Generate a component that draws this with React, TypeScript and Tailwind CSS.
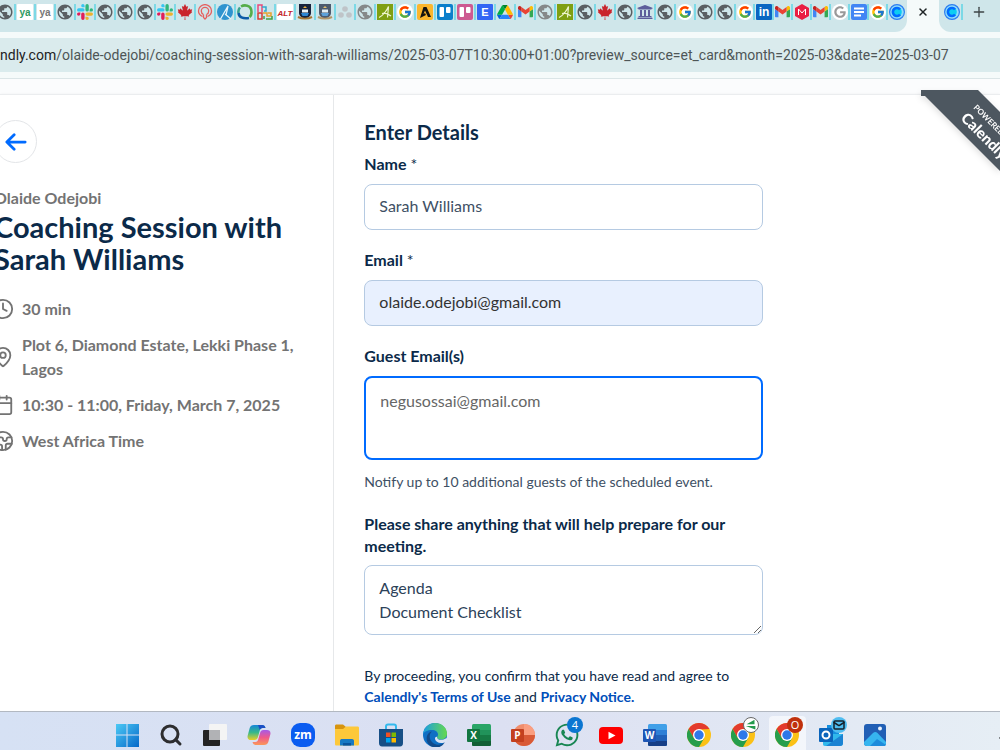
import React from "react";
import { FcGoogle } from "react-icons/fc";
import { MdPublic } from "react-icons/md";
import { FaCanadianMapleLeaf, FaGoogle, FaUniversity, FaWhatsapp } from "react-icons/fa";
import { Calendar, ChevronUp, Clock, Earth, Mail, MapPin, Plus, Search, X } from "lucide-react";

type TileProps = { fill: string; color?: string; text: string; size?: number; italic?: boolean };

const Tile: React.FC<TileProps> = ({ fill, color = "#fff", text, size = 11, italic }) => (
  <svg viewBox="0 0 16 16" className="size-4">
    <rect width="16" height="16" rx="1" fill={fill} />
    <text
      x="8"
      y="12"
      textAnchor="middle"
      fontSize={size}
      fontWeight="700"
      fontStyle={italic ? "italic" : "normal"}
      fontFamily="Liberation Sans, sans-serif"
      fill={color}
    >
      {text}
    </text>
  </svg>
);

const Globe = () => <MdPublic className="size-[18px] shrink-0 text-[#5a5f63]" />;
const PaleGlobe = () => <MdPublic className="size-[18px] shrink-0 text-[#858889]" />;
const Maple = () => <FaCanadianMapleLeaf className="size-4 text-[#c9252d]" />;
const University = () => <FaUniversity className="size-4 text-[#5d5e9b]" />;

const Google = () => (
  <span className="flex size-4 items-center justify-center rounded-full bg-white">
    <FcGoogle className="size-3.5" />
  </span>
);

const GreyGoogle = () => (
  <span className="flex size-4 items-center justify-center rounded-full bg-white">
    <FaGoogle className="size-3 text-[#999]" />
  </span>
);

const Slack = () => (
  <svg viewBox="0 0 24 24" className="size-4">
    <path fill="#E01E5A" d="M5.042 15.165a2.528 2.528 0 0 1-2.52 2.523A2.528 2.528 0 0 1 0 15.165a2.527 2.527 0 0 1 2.522-2.52h2.52v2.52zM6.313 15.165a2.527 2.527 0 0 1 2.521-2.52 2.527 2.527 0 0 1 2.521 2.52v6.313A2.528 2.528 0 0 1 8.834 24a2.528 2.528 0 0 1-2.521-2.522v-6.313z" />
    <path fill="#36C5F0" d="M8.834 5.042a2.528 2.528 0 0 1-2.521-2.52A2.528 2.528 0 0 1 8.834 0a2.528 2.528 0 0 1 2.521 2.522v2.52H8.834zM8.834 6.313a2.528 2.528 0 0 1 2.521 2.521 2.528 2.528 0 0 1-2.521 2.521H2.522A2.528 2.528 0 0 1 0 8.834a2.528 2.528 0 0 1 2.522-2.521h6.312z" />
    <path fill="#2EB67D" d="M18.956 8.834a2.528 2.528 0 0 1 2.522-2.521A2.528 2.528 0 0 1 24 8.834a2.528 2.528 0 0 1-2.522 2.521h-2.522V8.834zM17.688 8.834a2.528 2.528 0 0 1-2.523 2.521 2.527 2.527 0 0 1-2.52-2.521V2.522A2.527 2.527 0 0 1 15.165 0a2.528 2.528 0 0 1 2.523 2.522v6.312z" />
    <path fill="#ECB22E" d="M15.165 18.956a2.528 2.528 0 0 1 2.523 2.522A2.528 2.528 0 0 1 15.165 24a2.527 2.527 0 0 1-2.52-2.522v-2.522h2.52zM15.165 17.688a2.527 2.527 0 0 1-2.52-2.523 2.526 2.526 0 0 1 2.52-2.52h6.313A2.527 2.527 0 0 1 24 15.165a2.528 2.528 0 0 1-2.522 2.523h-6.313z" />
  </svg>
);

const Gmail = () => (
  <svg viewBox="52 42 88 66" className="w-[15px]">
    <path fill="#4285f4" d="M58 108h14V74L52 59v43c0 3.32 2.69 6 6 6" />
    <path fill="#34a853" d="M120 108h14c3.32 0 6-2.69 6-6V59l-20 15" />
    <path fill="#fbbc04" d="M120 48v26l20-15v-8c0-7.42-8.47-11.65-14.4-7.2" />
    <path fill="#ea4335" d="M72 74V48l24 18 24-18v26L96 92" />
    <path fill="#c5221f" d="M52 51v8l20 15V48l-5.6-4.2c-5.94-4.45-14.4-.22-14.4 7.2" />
  </svg>
);

const Drive = () => (
  <svg viewBox="0 0 87.3 78" className="w-4">
    <path fill="#0066da" d="m6.6 66.85 3.85 6.65c.8 1.4 1.95 2.5 3.3 3.3l13.75-23.8h-27.5c0 1.55.4 3.1 1.2 4.5z" />
    <path fill="#00ac47" d="m43.65 25-13.75-23.8c-1.35.8-2.5 1.9-3.3 3.3l-25.4 44a9.06 9.06 0 0 0 -1.2 4.5h27.5z" />
    <path fill="#ea4335" d="m73.55 76.8c1.35-.8 2.5-1.9 3.3-3.3l1.6-2.75 7.65-13.25c.8-1.4 1.2-2.95 1.2-4.5h-27.502l5.852 11.5z" />
    <path fill="#00832d" d="m43.65 25 13.75-23.8c-1.35-.8-2.9-1.2-4.5-1.2h-18.5c-1.6 0-3.15.45-4.5 1.2z" />
    <path fill="#2684fc" d="m59.8 53h-32.3l-13.75 23.8c1.35.8 2.9 1.2 4.5 1.2h50.8c1.6 0 3.15-.45 4.5-1.2z" />
    <path fill="#ffba00" d="m73.4 26.5-12.7-22c-.8-1.4-1.95-2.5-3.3-3.3l-13.75 23.8 16.15 28h27.45c0-1.55-.4-3.1-1.2-4.5z" />
  </svg>
);

const Pin = () => (
  <svg viewBox="0 0 16 16" className="size-4" fill="none" stroke="#e5605f" strokeWidth="1.300">
    <path d="M5.500 12.500C3 11.300 1.500 9.300 1.500 6.900a6.500 6.300 0 0 1 13 0c0 2.400-1.500 4.400-4 5.600" />
    <path d="M6.500 10.500C4.900 9.800 4.300 8.500 4.300 7a3.700 3.700 0 0 1 7.400 0c0 1.500-.6 2.800-2.200 3.500" />
    <path d="M6.500 10.500v3L8 15l1.500-1.500v-3" />
  </svg>
);

const Compass = () => (
  <svg viewBox="0 0 16 16" className="size-4">
    <circle cx="8" cy="8" r="8" fill="#2f94cf" />
    <path d="M3.500 15 11 2l-2 9M8 10l6 5" stroke="#e6f5fb" strokeWidth="1.300" fill="none" />
  </svg>
);

const Ring = () => (
  <svg viewBox="0 0 16 16" className="size-4" fill="none" strokeWidth="2.600">
    <path d="M4 2.500C6.500 1 14.500 0 14.500 8c0 3-.5 4-2 5" stroke="#55ad4a" />
    <path d="M3 3.500C1.300 5.500 1.300 8 1.500 9" stroke="#3aa38f" />
    <path d="M1.500 9c.5 4 4 6 10.500 5" stroke="#0d5ba8" />
  </svg>
);

const Maze = () => (
  <svg viewBox="0 0 16 16" className="size-4" fill="none" strokeWidth="1.500">
    <path d="M1 8V1h4v7" stroke="#e9487c" />
    <path d="M5 3h4v4H7" stroke="#33a9cf" />
    <path d="M1 9h4v6H1z" stroke="#d83a35" />
    <path d="M6 9h4v3h4V9h-3" stroke="#e7a22e" />
    <path d="M7 15v-3M9 15h6v-3" stroke="#459f45" />
  </svg>
);

const Crest = () => (
  <svg viewBox="0 0 16 16" className="size-4">
    <path d="M2 0h12v9c0 3-3 5-6 6-3-1-6-3-6-6z" fill="#17233c" />
    <path d="M5 5.500h6v3H5z" fill="#e9f2f7" />
    <path d="M4 9h8l-1.500 3h-5z" fill="#2c86d4" />
    <path d="m8 2 2 2H6z" fill="#f2b33c" />
    <path d="M1 13c4 2 10 2 14 0" stroke="#a57735" strokeWidth="2" fill="none" />
  </svg>
);

const GreyCrest = () => (
  <span className="opacity-70">
    <Crest />
  </span>
);

const Asana = () => (
  <svg viewBox="0 0 16 16" className="size-4" fill="#bfc4c8">
    <circle cx="8" cy="5" r="2.800" />
    <circle cx="4" cy="11" r="2.800" />
    <circle cx="12" cy="11" r="2.800" />
  </svg>
);

const Leaf = () => (
  <svg viewBox="0 0 16 16" className="size-4">
    <rect width="16" height="16" fill="#7f9f12" />
    <path d="M2 13.500C6 12 10 6 11.500 2.500L10.500 13.500M5 9.500c3-1 5-.5 9 2.500" stroke="#eef5cf" strokeWidth="1.200" fill="none" />
  </svg>
);

const Arrowhead = () => (
  <svg viewBox="0 0 16 16" className="size-4">
    <rect width="16" height="16" rx="2" fill="#fbb62c" />
    <path d="M6.500 3h3L14 13h-3L8 6.500 6.500 10 8 9l1 2-6 3z" fill="#15130f" />
  </svg>
);

const Trello: React.FC<{ fill: string }> = ({ fill }) => (
  <svg viewBox="0 0 16 16" className="size-4">
    <rect width="16" height="16" rx="2" fill={fill} />
    <rect x="2.500" y="3" width="4.500" height="10" rx="1" fill="#fff" />
    <rect x="9" y="3" width="4.500" height="6" rx="1" fill="#fff" />
  </svg>
);

const Hexagon = () => (
  <svg viewBox="0 0 16 16" className="size-4">
    <path d="m8 0 7 4v8l-7 4-7-4V4z" fill="#ea1f43" />
    <path d="M4.500 11V5L8 9l3.500-4v6" stroke="#fff" strokeWidth="1" fill="none" />
  </svg>
);

const Docs = () => (
  <svg viewBox="0 0 16 16" className="size-4">
    <rect width="16" height="16" rx="2" fill="#4285f4" />
    <path d="M3 4.500h10M3 8h10M3 11.500h7" stroke="#fff" strokeWidth="1.800" />
  </svg>
);

const CalendlyMark = () => (
  <svg viewBox="0 0 16 16" className="size-4">
    <circle cx="8" cy="8" r="7.400" fill="#8fdcfb" stroke="#2c7df0" strokeWidth="1.200" />
    <circle cx="8" cy="8" r="4.800" fill="#0ccdf2" />
    <path d="M11 10.500A4 4 0 1 1 11 5.500" stroke="#006bff" strokeWidth="2.600" fill="none" />
  </svg>
);

const wideTabs: React.ReactNode[] = [
  <Globe />, <Tile fill="#fff" color="#2f9a62" text="ya" size={10} />, <Tile fill="#fff" color="#777" text="ya" size={10} />,
  <Globe />, <Slack />, <Globe />, <Globe />, <Globe />, <Slack />, <Maple />, <Pin />, <Compass />, <Ring />, <Maze />,
  <Tile fill="#fff" color="#c32429" text="ALT" size={8} italic />, <Crest />, <GreyCrest />, <Asana />, <PaleGlobe />, <Leaf />,
  <Google />, <Arrowhead />, <Trello fill="#0b7fcb" />, <Trello fill="#cd5a91" />, <Tile fill="#3366f4" text="E" />, <Drive />,
  <Gmail />, <PaleGlobe />, <Leaf />, <Globe />, <Maple />, <Globe />, <University />, <Globe />, <Google />, <Globe />, <Globe />,
];

const narrowTabs: React.ReactNode[] = [
  <Google />, <Tile fill="#0a66c2" text="in" size={12} />, <Gmail />, <Hexagon />, <Gmail />, <GreyGoogle />, <Docs />, <Google />,
  <CalendlyMark />,
];

const BrowserChrome = () => (
  <header className="shrink-0 border-b border-[#dbe5e7] bg-[#f5fafa]">
    <div className="flex h-8 overflow-hidden">
      <div className="flex shrink-0 rounded-br-xl bg-[#cfe6ea] pt-1">
        <div className="-ml-1 flex h-4">
          {wideTabs.map((icon, i) => (
            <span key={i} className="flex w-5 items-center justify-center border-r-2 border-[#7cd9e6]">
              {icon}
            </span>
          ))}
          {narrowTabs.map((icon, i) => (
            <span key={i} className="flex w-[19px] items-center justify-center border-r-2 border-[#7cd9e6] last:border-transparent">
              {icon}
            </span>
          ))}
        </div>
      </div>
      <button aria-label="Close tab" className="flex h-6 w-8 shrink-0 items-center justify-center">
        <X className="size-3 text-[#1f2426]" strokeWidth={3} />
      </button>
      <div className="flex flex-1 items-start gap-2 rounded-bl-xl bg-[#cfe6ea] pt-1 pl-1">
        <span className="flex h-4 w-5 items-center justify-center border-r-2 border-[#7cd9e6]">
          <CalendlyMark />
        </span>
        <button aria-label="New tab">
          <Plus className="size-4 text-[#3e4547]" strokeWidth={2} />
        </button>
      </div>
    </div>
    <div className="my-1.5 flex h-[34px] items-center overflow-hidden bg-[#daebed] font-['Roboto','Noto_Sans',sans-serif] text-sm whitespace-nowrap text-[#4e5657]">
      <span className="text-[#1d2223]">ndly.com</span>
      <span>/olaide-odejobi/coaching-session-with-sarah-williams/2025-03-07T10:30:00+01:00?preview_source=et_card&month=2025-03&date=2025-03-07</span>
    </div>
  </header>
);

const details = [
  { Icon: Clock, text: "30 min" },
  { Icon: MapPin, text: "Plot 6, Diamond Estate, Lekki Phase 1, Lagos" },
  { Icon: Calendar, text: "10:30 - 11:00, Friday, March 7, 2025" },
  { Icon: Earth, text: "West Africa Time" },
];

const EventSummary = () => (
  <aside className="box-content w-1/3 shrink-0 border-r border-[#e6e8ea]">
    <div className="-ml-1.5 pt-[25px] pr-6">
      <button
        aria-label="Back"
        className="flex size-[43px] items-center justify-center rounded-full border border-[#e3e5e8] text-[#006bff]"
      >
        <svg viewBox="0 0 24 24" className="size-[22px]" fill="none" stroke="currentColor" strokeWidth="3" strokeLinecap="round" strokeLinejoin="round">
          <path d="M22 12H3M10 4l-8 8 8 8" />
        </svg>
      </button>
      <p className="mt-[23px] font-bold text-[#737373]">Olaide Odejobi</p>
      <h1 className="mt-px text-[29px] leading-8 font-bold text-[#0b2a49]">Coaching Session with Sarah Williams</h1>
      <ul className="mt-[22px] space-y-3 font-bold text-[#737373]">
        {details.map(({ Icon, text }) => (
          <li key={text} className="flex items-center gap-2">
            <Icon className="-ml-0.5 size-[22px] shrink-0" strokeWidth={2} />
            <span>{text}</span>
          </li>
        ))}
      </ul>
    </div>
  </aside>
);

const input = "mt-[9px] block h-[46px] w-full rounded-lg border border-[#b5cae2] px-3.5 pb-1";
const label = "block font-bold leading-[22px]";

const DetailsForm = () => (
  <form className="w-[399px] max-w-full text-[#0b2a49]">
    <h2 className="text-xl leading-6 font-bold">Enter Details</h2>
    <label htmlFor="name" className={`${label} mt-[9px]`}>
      Name <span className="font-normal">*</span>
    </label>
    <input id="name" defaultValue="Sarah Williams" className={`${input} text-[#3e5064]`} />
    <label htmlFor="email" className={`${label} mt-[19px]`}>
      Email <span className="font-normal">*</span>
    </label>
    <input id="email" defaultValue="olaide.odejobi@gmail.com" className={`${input} bg-[#e8f0fe] text-[#333]`} />
    <label htmlFor="guests" className={`${label} mt-[19px]`}>
      Guest Email(s)
    </label>
    <textarea
      id="guests"
      defaultValue="negusossai@gmail.com"
      className="mt-[9px] block h-[84px] w-full resize-none rounded-lg border-2 border-[#006bff] px-3.5 py-[11px] text-[#666] outline-none"
    />
    <p className="mt-[11px] text-sm leading-[21px] text-[#3e5064]">Notify up to 10 additional guests of the scheduled event.</p>
    <label htmlFor="notes" className={`${label} mt-[21px]`}>
      Please share anything that will help prepare for our meeting.
    </label>
    <textarea
      id="notes"
      defaultValue={"Agenda\nDocument Checklist"}
      className="mt-2 block h-[70px] w-full resize-y rounded-lg border border-[#b5cae2] px-3.5 py-2.5 text-[#2c4259]"
    />
    <p className="mt-[30px] text-sm leading-[21px]">
      By proceeding, you confirm that you have read and agree to{" "}
      <a href="#terms" className="font-bold text-[#004eba]">Calendly's Terms of Use</a> and{" "}
      <a href="#privacy" className="font-bold text-[#004eba]">Privacy Notice.</a>
    </p>
  </form>
);

const Ribbon = () => (
  <a href="#calendly" aria-label="Powered by Calendly" className="absolute top-[11px] right-0">
    <svg viewBox="0 0 79 84" className="h-[84px] w-[79px] drop-shadow-md">
      <path d="M0 0h57l22 22v59L4 6H0z" fill="#4d5760" />
      <g fill="#fff" fontFamily="Lato, sans-serif">
        <text transform="translate(52 18) rotate(45)" fontSize="8" fontWeight="700">POWERED BY</text>
        <text transform="translate(39 29) rotate(45)" fontSize="15" fontWeight="900">Calendly</text>
      </g>
    </svg>
  </a>
);

const OfficeIcon: React.FC<{ letter: string; shades: string[]; round?: boolean }> = ({ letter, shades, round }) => (
  <svg viewBox="0 0 24 24" className="size-6">
    {round ? (
      <>
        <circle cx="13" cy="12" r="11" fill={shades[0]} />
        <path d="M13 1a11 11 0 0 1 11 11H13z" fill={shades[1]} />
        <path d="M24 12a11 11 0 0 1-22 0z" fill={shades[2]} />
      </>
    ) : (
      <>
        <rect x="5" y="1" width="19" height="22" rx="1.500" fill={shades[0]} />
        <path d="M5 7h19v5H5z" fill={shades[1]} />
        <path d="M5 12h19v6H5z" fill={shades[2]} />
        <path d="M5 18h19v3.500a1.500 1.500 0 0 1-1.500 1.500h-16A1.500 1.500 0 0 1 5 21.500z" fill={shades[3]} />
      </>
    )}
    <rect y="6" width="13" height="13" rx="1" fill={shades[4]} />
    <text x="6.500" y="16" fontSize="10" fontWeight="700" textAnchor="middle" fill="#fff" fontFamily="Open Sans, sans-serif">
      {letter}
    </text>
  </svg>
);

const Windows = () => (
  <svg viewBox="0 0 24 24" className="size-6">
    <defs>
      <linearGradient id="win" x2="1" y2="1">
        <stop stopColor="#4cc9f5" />
        <stop offset="1" stopColor="#0669c9" />
      </linearGradient>
    </defs>
    <path d="M1 1h10.500v10.500H1zM12.500 1H24v10.500H12.500zM1 12.500h10.500V24H1zM12.500 12.500H24V24H12.500z" fill="url(#win)" />
  </svg>
);

const TaskView = () => (
  <svg viewBox="0 0 24 24" className="size-6">
    <rect y="7" width="17" height="16" rx="1" fill="#242424" />
    <rect x="6" y="1" width="18" height="16" rx="1" fill="#f4f4f4" />
    <path d="M6 7h11v10H6z" fill="#b1b2b5" />
  </svg>
);

const Copilot = () => (
  <svg viewBox="0 0 24 24" className="size-6">
    <defs>
      <linearGradient id="copA" x2="0" y2="1">
        <stop stopColor="#1687d9" />
        <stop offset=".5" stopColor="#38b88a" />
        <stop offset="1" stopColor="#e9cf26" />
      </linearGradient>
      <linearGradient id="copB" x2="0" y2="1">
        <stop stopColor="#a55ae8" />
        <stop offset=".5" stopColor="#ef5a8b" />
        <stop offset="1" stopColor="#fb9858" />
      </linearGradient>
    </defs>
    <path d="M7 2h8c2 0 3 1 3.500 3h-3c-1.500 0-2.300 1-2.700 2.500L11 14c-.6 2-1.500 3-3.500 3H4c-2.500 0-4-1.500-3.300-4.500l2-7.500C3.300 3 4.700 2 7 2z" fill="url(#copA)" />
    <path d="M17 22H9c-2 0-3-1-3.500-3h3c1.500 0 2.300-1 2.700-2.500L13 10c.6-2 1.500-3 3.500-3H20c2.500 0 4 1.500 3.300 4.500l-2 7.500c-.6 2-2 3-4.300 3z" fill="url(#copB)" />
    <path d="M11 2h4c2 0 3 1 3.500 3h-3c-1.500 0-2.300 1-2.700 2z" fill="#1b4fc4" />
  </svg>
);

const Zoom = () => (
  <svg viewBox="0 0 24 24" className="size-6">
    <rect width="24" height="24" rx="9" fill="#0b5cf0" />
    <text x="12" y="15.500" fontSize="12" fontWeight="700" textAnchor="middle" fill="#fff" fontFamily="Open Sans, sans-serif">zm</text>
  </svg>
);

const Folder = () => (
  <svg viewBox="0 0 24 24" className="size-6">
    <path d="M0 3c0-1 .5-1.500 1.500-1.500H8L11 4v3H0z" fill="#d7940f" />
    <path d="M0 6h8l3-2.500h11.500c1 0 1.500.5 1.500 1.500v16c0 1-.5 1.500-1.500 1.500h-21C.5 22.500 0 22 0 21z" fill="#fdc83a" />
    <path d="M5 22.500V18c0-1.500 1-2 2-2h10c1.500 0 2 1 2 2v4.500z" fill="#1779c4" />
    <path d="M8 22.500V20h8v2.500z" fill="#0a559e" />
  </svg>
);

const Store = () => (
  <svg viewBox="0 0 24 24" className="size-6">
    <path d="M7 7V3.500C7 2 8 1.500 9 1.500h6c1.500 0 2 .5 2 2V7" fill="none" stroke="#35b9ed" strokeWidth="2" />
    <path d="M0 6h24v14c0 2-1 3.500-3 3.500H3c-2 0-3-1.500-3-3.500z" fill="#174f86" />
    <path d="M7 9.500h4.500V14H7z" fill="#f25022" />
    <path d="M12.500 9.500H17V14h-4.500z" fill="#7fba00" />
    <path d="M7 15h4.500v4.500H7z" fill="#00a4ef" />
    <path d="M12.500 15H17v4.500h-4.500z" fill="#ffb900" />
  </svg>
);

const Edge = () => (
  <svg viewBox="0 0 24 24" className="size-6">
    <defs>
      <linearGradient id="edgeA" x2="1">
        <stop stopColor="#1b9de2" />
        <stop offset="1" stopColor="#65d94e" />
      </linearGradient>
    </defs>
    <circle cx="12" cy="12" r="12" fill="#0f6fc5" />
    <path d="M0 11C1 4 6 0 12 0c7 0 12 5 12 10.500 0 4-3 6-6 6-2.500 0-4-1-4-2 0-.8 1-1.200 1-3C15 9 12.500 7 9 7c-4.500 0-8 2-9 4z" fill="url(#edgeA)" />
    <path d="M9 8.500c-3.500 3-3 8.500 1 11.500 4 3 9 2 12-1-3 6-9 6-12 5-6-1.500-8-9-5-13 1-1.500 2.500-2.300 4-2.500z" fill="#114a8b" />
    <path d="M14 14.500c.5 2.500 5 3.500 9.500.5l1.500 3-3.500 1.500c-5 1.500-9-.5-9.500-3.500 0-1.500 1-2.500 2-2z" fill="#dde4f4" />
  </svg>
);

const YouTube = () => (
  <svg viewBox="0 0 24 24" className="size-6">
    <rect y="4" width="24" height="17" rx="4" fill="#fe0000" />
    <path d="m9.500 8.800 7 3.700-7 3.700z" fill="#fff" />
  </svg>
);

const Chrome = () => (
  <svg viewBox="0 0 24 24" className="size-6">
    <circle cx="12" cy="12" r="12" fill="#fbc116" />
    <path d="M1.600 6A12 12 0 0 1 22.400 6L12 6.500 6.800 15z" fill="#e33b2e" />
    <path d="M1.600 6A12 12 0 0 0 12 24l5.200-9-5.200 3-5.200-3z" fill="#269e4c" />
    <circle cx="12" cy="12" r="6" fill="#fff" />
    <circle cx="12" cy="12" r="4.700" fill="#2f78e8" />
  </svg>
);

const Outlook = () => (
  <svg viewBox="0 0 24 24" className="size-6">
    <path d="M8 2h12v11H8z" fill="#1490df" />
    <path d="M4 11h20v9c0 2-1 3-3 3H6c-1.500 0-2-1-2-2z" fill="#31b9ec" />
    <path d="M24 11v9c0 2-1 3-3 3H7z" fill="#1b83d3" />
    <rect y="5" width="14" height="14" rx="1" fill="#0a64bb" />
    <circle cx="7" cy="12" r="3.500" fill="none" stroke="#fff" strokeWidth="2" />
  </svg>
);

const Photos = () => (
  <svg viewBox="0 0 24 24" className="size-6">
    <rect x="1" y="1" width="22" height="22" rx="3" fill="#215fb5" />
    <path d="M1 19 10 10c1.500-1.500 3-1.500 4.500 0l8.500 9v1c0 2-1 3-3 3H4c-2 0-3-1-3-3z" fill="#36b5ef" />
    <path d="m14 16 9 6c-1 1-2 1-3 1H7z" fill="#1d8bdb" />
    <circle cx="17" cy="5.500" r="2" fill="#e8f2fd" />
  </svg>
);

const badge = "absolute -top-1.5 -right-1 flex size-4 items-center justify-center rounded-full font-['Open_Sans',sans-serif] text-[11px] leading-4";

const apps = [
  { name: "Start", icon: <Windows /> },
  { name: "Search", icon: <Search className="size-6 text-[#2d2d2f]" strokeWidth={3} /> },
  { name: "Task view", icon: <TaskView /> },
  { name: "Copilot", icon: <Copilot /> },
  { name: "Zoom", icon: <Zoom /> },
  { name: "Files", icon: <Folder /> },
  { name: "Store", icon: <Store /> },
  { name: "Edge", icon: <Edge /> },
  { name: "Excel", icon: <OfficeIcon letter="X" shades={["#2aa567", "#21935a", "#167a44", "#125f35", "#127540"]} /> },
  { name: "PowerPoint", icon: <OfficeIcon letter="P" round shades={["#f08d6c", "#fa9e80", "#d95a37", "#d95a37", "#c4401f"]} /> },
  {
    name: "WhatsApp",
    icon: <FaWhatsapp className="size-[26px] text-[#188653]" />,
    badge: <span className={`${badge} bg-[#0b76d1] text-white`}>4</span>,
  },
  { name: "YouTube", icon: <YouTube /> },
  { name: "Word", icon: <OfficeIcon letter="W" shades={["#41a0e8", "#2e7fd6", "#2060b8", "#173f87", "#1d56b5"]} /> },
  { name: "Chrome", icon: <Chrome /> },
  {
    name: "Chrome work profile",
    icon: <Chrome />,
    badge: (
      <span className={`${badge} border border-[#686868] bg-white`}>
        <svg viewBox="0 0 16 16" className="size-4">
          <path d="m3 7 9-5v5zM2 9h11v4z" fill="#239a4c" />
        </svg>
      </span>
    ),
  },
  { name: "Chrome personal profile", active: true, icon: <Chrome />, badge: <span className={`${badge} bg-[#c0310d] text-white`}>O</span> },
  {
    name: "Outlook",
    icon: <Outlook />,
    badge: (
      <span className={`${badge} bg-[#50bdf0]`}>
        <Mail className="size-3 text-[#14212b]" strokeWidth={3} />
      </span>
    ),
  },
  { name: "Photos", icon: <Photos /> },
];

const Taskbar = () => (
  <nav className="flex h-[39px] shrink-0 items-start overflow-hidden border-t border-[#b2b8c1] bg-gradient-to-r from-[#d6e1f4] via-[#dce0f2] to-[#e6eef5] pl-[105px]">
    {apps.map((app) => (
      <button key={app.name} aria-label={app.name} className="flex w-11 shrink-0 justify-center pt-1">
        <span className={`flex h-10 w-[37px] justify-center rounded-t pt-[7px] ${app.active ? "bg-white/60" : ""}`}>
          <span className="relative flex size-6 items-center justify-center">
            {app.icon}
            {app.badge}
          </span>
        </span>
      </button>
    ))}
    <button aria-label="Show hidden icons" className="-mr-3 ml-auto pt-4">
      <ChevronUp className="size-4" />
    </button>
  </nav>
);

const App: React.FC = () => (
  <div className="flex h-screen flex-col overflow-hidden bg-white font-['Lato','Liberation_Sans',sans-serif] text-base">
    <BrowserChrome />
    <main className="relative flex flex-1 flex-col overflow-hidden bg-[#fbfcfd] pt-[15px]">
      <section className="flex flex-1 overflow-hidden border-t border-[#ebedef] bg-white shadow">
        <EventSummary />
        <div className="flex-1 overflow-hidden pt-[25px] pl-[30px]">
          <DetailsForm />
        </div>
      </section>
      <Ribbon />
    </main>
    <Taskbar />
  </div>
);

export default App;
